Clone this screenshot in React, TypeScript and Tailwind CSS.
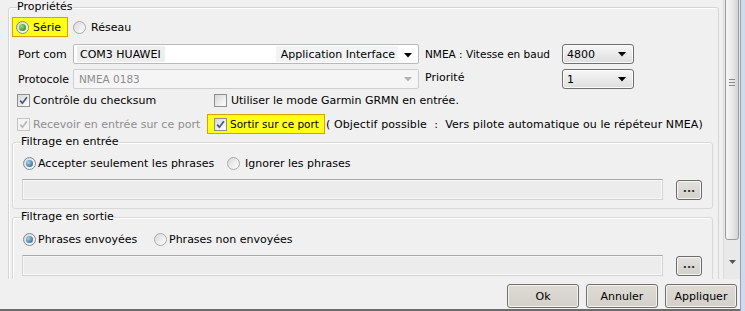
import React from "react";

function Radio({ checked, tint }: { checked?: boolean; tint?: "green" | "blue" }) {
  return (
    <span
      className={
        checked
          ? "w-[13px] h-[13px] shrink-0 rounded-full border border-[#7f8a93] bg-[linear-gradient(135deg,#d4d4d4,#ffffff)] flex items-center justify-center"
          : "w-[13px] h-[13px] shrink-0 rounded-full border border-[#a9a9a9] bg-[linear-gradient(135deg,#d9d9d9,#ffffff)] flex items-center justify-center"
      }
    >
      {checked && (
        <span
          className={
            tint === "green"
              ? "w-[7px] h-[7px] rounded-full bg-[radial-gradient(circle_at_35%_35%,#9be07a,#1f6e12)]"
              : "w-[7px] h-[7px] rounded-full bg-[radial-gradient(circle_at_35%_35%,#a5d4f0,#1c4f7c)]"
          }
        />
      )}
    </span>
  );
}

function Check({ checked, disabled }: { checked?: boolean; disabled?: boolean }) {
  return (
    <span
      className={
        disabled
          ? "w-[13px] h-[13px] shrink-0 border border-[#c4c4c4] bg-[#f4f4f4] flex items-center justify-center"
          : "w-[13px] h-[13px] shrink-0 border border-[#8e8f8f] bg-[linear-gradient(135deg,#d6d6d6,#ffffff)] flex items-center justify-center"
      }
    >
      {checked && (
        <svg width="9" height="9" viewBox="0 0 9 9">
          <path
            d="M1.2 4.6 L3.4 7.2 L7.9 1.2"
            stroke={disabled ? "#b8b8b8" : "#45578a"}
            strokeWidth="1.7"
            fill="none"
          />
        </svg>
      )}
    </span>
  );
}

function Arrow({ color = "#000" }: { color?: string }) {
  return (
    <svg width="8" height="5" viewBox="0 0 8 5">
      <path d="M0 0 H8 L4 4.5 Z" fill={color} />
    </svg>
  );
}

function SmallCombo({ value }: { value: string }) {
  return (
    <div className="w-[72px] h-[20px] rounded-[3px] border border-[#707070] bg-[linear-gradient(#f7f7f7,#dedede)] flex items-center justify-between pl-[4px] pr-[7px] shadow-[inset_0_0_0_1px_#fafafa] text-[11px]">
      <span>{value}</span>
      <Arrow />
    </div>
  );
}

function Field() {
  return (
    <div className="flex items-center">
      <div className="ml-[9px] w-[641px] h-[21px] bg-[#ececec] border border-[#d3d3d3] border-t-[#a9a9a9] shadow-[inset_0_0_0_1px_#f7f7f7]" />
      <div className="ml-[13px] w-[26px] h-[20px] rounded-[3px] border border-[#6c6c6c] bg-[linear-gradient(#e4e2de,#d2d0ca)] shadow-[inset_0_0_0_1px_#f5f5f5] flex items-center justify-center text-[11px] font-bold leading-none pb-[3px] tracking-[0px] text-[#333]">
        ...
      </div>
    </div>
  );
}

function Button({ label }: { label: string }) {
  return (
    <div className="w-[72px] h-[24px] rounded-[3px] border border-[#6f6f6f] bg-[linear-gradient(#dedbd5,#d3d0ca)] shadow-[inset_0_0_0_1px_#f3f3f3] flex items-center justify-center text-[11px]">
      {label}
    </div>
  );
}

export default function App() {
  return (
    <div className="w-[745px] h-[311px] flex bg-[#f0f0f0] overflow-hidden font-['DejaVu_Sans',Verdana,sans-serif] text-[11px] leading-[13px] text-black">
      <div className="w-[740px] flex flex-col">
        <div className="h-[279px] flex">
          <div className="w-[723px] overflow-hidden">
            <fieldset className="ml-[8px] w-[711px] h-[330px] border border-[#d5d5d5] rounded-[3px] shadow-[inset_1px_1px_0_#ffffff]">
              <legend className="ml-[8px] px-0 h-[14px] leading-[14px]">Propriétés</legend>

              {/* Row 1 */}
              <div className="mt-[3px] ml-[3px] h-[20px] flex items-center">
                <div className="w-[56px] h-[20px] border border-[#d8a200] bg-[#ffff17] flex items-center pl-[3px] gap-[4px]">
                  <Radio checked tint="green" />
                  <span>Série</span>
                </div>
                <div className="ml-[5px] flex items-center gap-[5px]">
                  <Radio />
                  <span>Réseau</span>
                </div>
              </div>

              {/* Row 2 */}
              <div className="mt-[7px] h-[20px] flex items-center">
                <span className="ml-[9px] w-[55px]">Port com</span>
                <div className="w-[346px] h-[20px] rounded-[2px] border border-[#b9b9b9] bg-white flex items-center">
                  <span className="ml-[3px] h-[16px] bg-[#eeeeee] pl-[3px] pr-[4px] flex items-center">COM3 HUAWEI</span>
                  <span className="flex-1" />
                  <span className="h-[16px] bg-[#f1f3f5] pl-[5px] pr-[3px] flex items-center">Application Interface</span>
                  <span className="w-[20px] flex justify-center pt-[2px]">
                    <Arrow />
                  </span>
                </div>
                <span className="ml-[6px] w-[137px] text-[10.5px]">NMEA : Vitesse en baud</span>
                <SmallCombo value="4800" />
              </div>

              {/* Row 3 */}
              <div className="mt-[5px] h-[20px] flex items-center">
                <span className="ml-[9px] w-[55px]">Protocole</span>
                <div className="w-[346px] h-[20px] rounded-[2px] border border-[#cfcfcf] bg-[#f5f5f5] flex items-center justify-between pl-[5px] pr-[6px] text-[#8d8d8d] text-[10.5px]">
                  <span>NMEA 0183</span>
                  <Arrow color="#b0b0b0" />
                </div>
                <span className="ml-[6px] w-[137px] -mt-[4px]">Priorité</span>
                <SmallCombo value="1" />
              </div>

              {/* Row 4 */}
              <div className="mt-[5px] h-[13px] flex items-center">
                <div className="ml-[8px] w-[197px] flex items-center gap-[3px]">
                  <Check checked />
                  <span>Contrôle du checksum</span>
                </div>
                <div className="flex items-center gap-[4px]">
                  <Check />
                  <span>Utiliser le mode Garmin GRMN en entrée.</span>
                </div>
              </div>

              {/* Row 5 */}
              <div className="mt-[7px] h-[20px] flex items-center">
                <div className="ml-[8px] w-[190px] flex items-center gap-[3px] text-[#8e8e8e]">
                  <Check checked disabled />
                  <span>Recevoir en entrée sur ce port</span>
                </div>
                <div className="w-[118px] h-[20px] border border-[#d8a200] bg-[#ffff17] flex items-center pl-[6px] gap-[3px]">
                  <Check checked />
                  <span className="whitespace-nowrap text-[10.5px]">Sortir sur ce port</span>
                </div>
                <span className="ml-[1px] whitespace-pre tracking-[0.1px]">( Objectif possible  :  Vers pilote automatique ou le répéteur NMEA)</span>
              </div>

              {/* Filtrage en entrée */}
              <fieldset className="mt-[1px] ml-[3px] w-[701px] h-[74px] border border-[#d8d8d8] rounded-[3px] shadow-[inset_1px_1px_0_#ffffff]">
                <legend className="ml-[8px] px-0 h-[14px] leading-[14px]">Filtrage en entrée</legend>
                <div className="mt-[8px] h-[13px] flex items-center pl-[10px]">
                  <div className="w-[204px] flex items-center gap-[2px]">
                    <Radio checked />
                    <span>Accepter seulement les phrases</span>
                  </div>
                  <div className="flex items-center gap-[5px]">
                    <Radio />
                    <span>Ignorer les phrases</span>
                  </div>
                </div>
                <div className="mt-[9px]">
                  <Field />
                </div>
              </fieldset>

              {/* Filtrage en sortie */}
              <fieldset className="mt-[1px] ml-[3px] w-[701px] h-[100px] border border-[#d8d8d8] rounded-[3px] shadow-[inset_1px_1px_0_#ffffff]">
                <legend className="ml-[8px] px-0 h-[14px] leading-[14px]">Filtrage en sortie</legend>
                <div className="mt-[9px] h-[13px] flex items-center pl-[10px]">
                  <div className="w-[131px] flex items-center gap-[2px]">
                    <Radio checked />
                    <span>Phrases envoyées</span>
                  </div>
                  <div className="flex items-center gap-[2px]">
                    <Radio />
                    <span>Phrases non envoyées</span>
                  </div>
                </div>
                <div className="mt-[9px]">
                  <Field />
                </div>
              </fieldset>
            </fieldset>
          </div>

          {/* Scrollbar */}
          <div className="w-[17px] h-full bg-[#e9e9e9] border-l border-[#dcdcdc] flex flex-col overflow-hidden">
            <div className="ml-[1px] w-[14px] h-[316px] -mt-[76px] shrink-0 rounded-b-[3px] border border-[#9b9b9b] bg-[linear-gradient(90deg,#f6f6f6,#e6e6e6_60%,#d2d2d2)] flex flex-col items-center justify-center gap-[2px]">
              <span className="w-[6px] h-[1px] bg-[#8a8a8a]" />
              <span className="w-[6px] h-[1px] bg-[#8a8a8a]" />
              <span className="w-[6px] h-[1px] bg-[#8a8a8a]" />
            </div>
            <div className="flex-1" />
            <div className="h-[17px] flex items-center justify-center mb-[9px]">
              <svg width="7" height="4" viewBox="0 0 7 4">
                <path d="M0 0 H7 L3.5 4 Z" fill="#555" />
              </svg>
            </div>
          </div>
        </div>

        {/* Bottom buttons */}
        <div className="flex-1 flex justify-end items-start pt-[5px] pr-[3px] gap-[7px]">
          <Button label="Ok" />
          <Button label="Annuler" />
          <Button label="Appliquer" />
        </div>
        <div className="h-[2px] bg-[#6b6b6b]" />
      </div>
      <div className="w-[5px] h-full border-l border-[#8ea3bb] bg-[#cfdbea]" />
    </div>
  );
}
